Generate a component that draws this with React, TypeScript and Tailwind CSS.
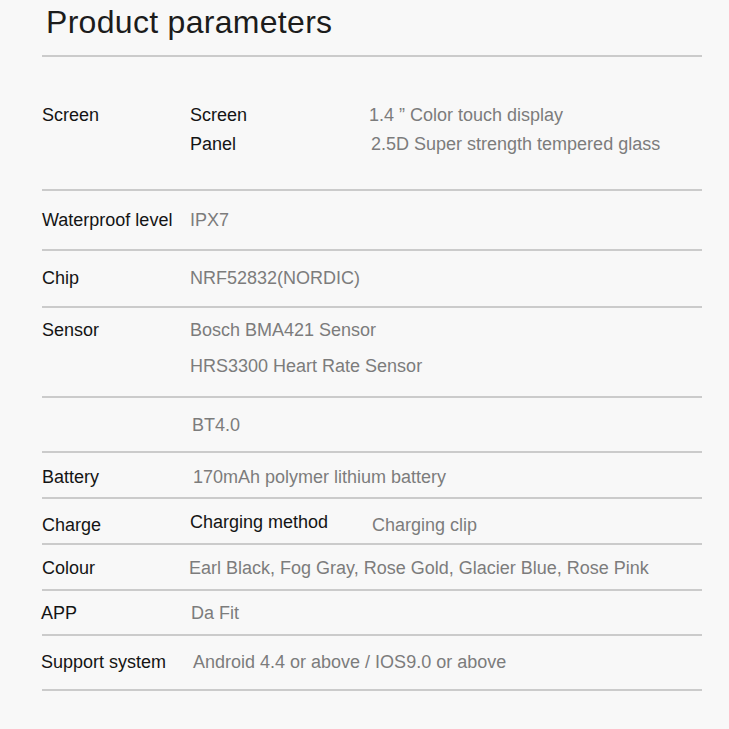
const rows: { label: string; h: string; body: React.ReactNode; pad?: string }[] = [
  {
    label: 'Waterproof level',
    h: 'h-[60px]',
    body: <span className="text-[#7c7c7c]">IPX7</span>,
  },
  {
    label: 'Chip',
    h: 'h-[57px]',
    body: <span className="text-[#7c7c7c]">NRF52832(NORDIC)</span>,
  },
]

function Row({ label, h, children, align = 'items-center', labelClass = '', pad = '' }: {
  label: string
  h: string
  children: React.ReactNode
  align?: string
  labelClass?: string
  pad?: string
}) {
  return (
    <div className={`grid grid-cols-[148px_1fr] ${align} ${h} ${pad} border-b-2 border-[#cbcbcb]`}>
      <span className={`text-[#141414] ${labelClass}`}>{label}</span>
      <div>{children}</div>
    </div>
  )
}

export default function App() {
  return (
    <div className="w-[729px] h-[729px] bg-[#f8f8f8] overflow-hidden" style={{ fontFamily: '"Liberation Sans", Arial, sans-serif' }}>
      <div className="ml-[42px] w-[660px] text-[18px]">
        <div className="h-[57px] border-b-2 border-[#cbcbcb] pl-[4px]">
          <h1 className="text-[32px] leading-[44px] text-[#1c1c1c] tracking-[0.3px]">Product parameters</h1>
        </div>

        <div className="grid grid-cols-[148px_1fr] content-start h-[134px] pt-[44px] border-b-2 border-[#cbcbcb] leading-[29px]">
          <span className="text-[#141414]">Screen</span>
          <div className="grid grid-cols-[179px_1fr] content-start">
            <span className="text-[#141414]">Screen</span>
            <span className="text-[#7c7c7c]">1.4 ” Color touch display</span>
            <span className="text-[#141414]">Panel</span>
            <span className="text-[#7c7c7c] pl-[2px]">2.5D Super strength tempered glass</span>
          </div>
        </div>

        {rows.map((r) => (
          <Row key={r.label} label={r.label} h={r.h} pad={r.pad}>
            {r.body}
          </Row>
        ))}

        <Row label="Sensor" h="h-[90px]" align="items-start leading-[36px]" pad="pt-[4px]">
          <div className="flex flex-col text-[#7c7c7c]">
            <span>Bosch BMA421 Sensor</span>
            <span>HRS3300 Heart Rate Sensor</span>
          </div>
        </Row>

        <Row label="" h="h-[55px]" pad="pt-[2px]">
          <span className="text-[#7c7c7c] pl-[2px]">BT4.0</span>
        </Row>

        <Row label="Battery" h="h-[46px]" pad="pt-[4px]">
          <span className="text-[#7c7c7c] pl-[3px]">170mAh polymer lithium battery</span>
        </Row>

        <Row label="Charge" h="h-[46px]" pad="pt-[8px]">
          <div className="flex items-center">
            <span className="text-[#141414] w-[182px] -mt-[5px]">Charging method</span>
            <span className="text-[#7c7c7c]">Charging clip</span>
          </div>
        </Row>

        <Row label="Colour" h="h-[46px]" pad="pt-[3px]">
          <span className="text-[#7c7c7c] -ml-[1px]">Earl Black, Fog Gray, Rose Gold, Glacier Blue, Rose Pink</span>
        </Row>

        <Row label="APP" h="h-[45px]" labelClass="-ml-[1px]" pad="pt-[1px]">
          <span className="text-[#7c7c7c] pl-[1px]">Da Fit</span>
        </Row>

        <Row label="Support system" h="h-[55px]" labelClass="-ml-[1px]">
          <span className="text-[#7c7c7c] pl-[3px]">Android 4.4 or above / IOS9.0 or above</span>
        </Row>
      </div>
    </div>
  )
}
